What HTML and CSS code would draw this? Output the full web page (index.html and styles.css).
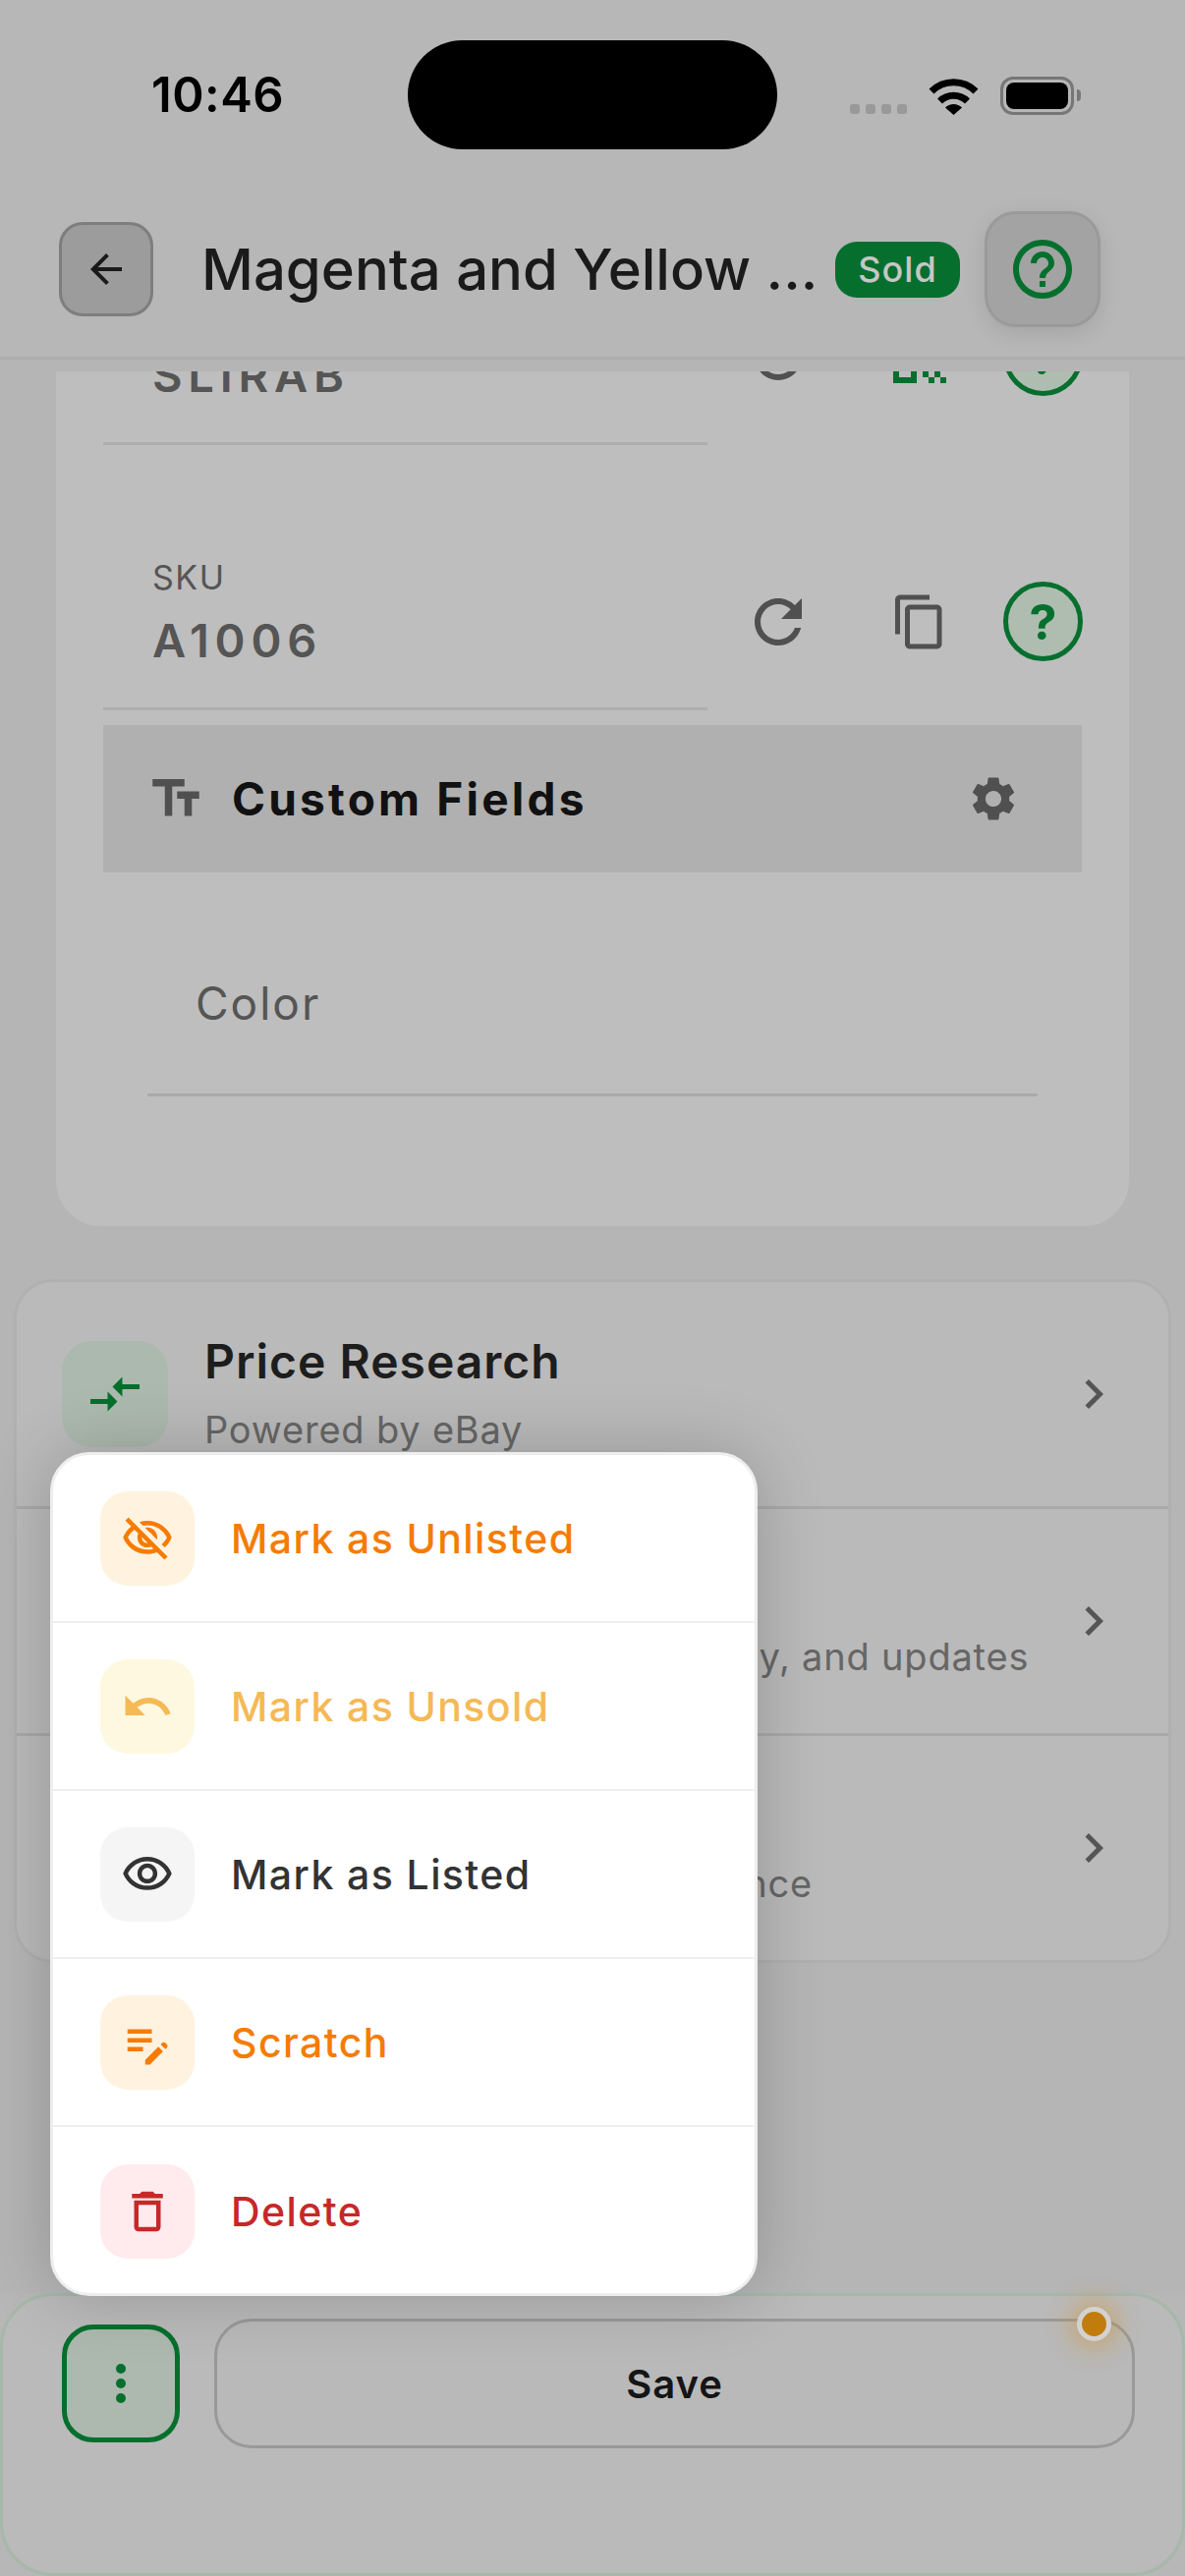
FILE: index.html
```html
<!DOCTYPE html>
<html lang="en">
<head>
<meta charset="utf-8">
<title>Item details</title>
<link rel="stylesheet" href="styles.css">
</head>
<body>
<div class="app">
  <div class="status">
    <div class="time">10:46</div>
    <div class="island"></div>
    <div class="status-icons">
      <div class="signal"><i></i><i></i><i></i><i></i></div>
      <svg class="wifi" viewBox="0 0 51 37"><path d="M3 13A32 32 0 0 1 48 13M11.5 23A20 20 0 0 1 39.5 23" fill="none" stroke="#000" stroke-width="7"/><path d="M17 29.5A12 12 0 0 1 34 29.5L25.5 37z"/></svg>
      <div class="battery"><div class="battery-fill"></div></div>
      <div class="battery-nub"></div>
    </div>
  </div>

  <header class="nav">
    <button class="back"><svg class="i48" viewBox="0 0 24 24"><path d="M20 11H7.83l5.59-5.59L12 4l-8 8 8 8 1.41-1.41L7.83 13H20v-2z"/></svg></button>
    <h1 class="title">Magenta and Yellow ...</h1>
    <span class="badge">Sold</span>
    <button class="help-top"><svg class="i72 green" viewBox="0 0 24 24"><path d="M11 18h2v-2h-2v2zm1-16C6.48 2 2 6.48 2 12s4.48 10 10 10 10-4.48 10-10S17.52 2 12 2zm0 18c-4.41 0-8-3.59-8-8s3.59-8 8-8 8 3.59 8 8-3.59 8-8 8zm0-14c-2.21 0-4 1.79-4 4h2c0-1.1.9-2 2-2s2 .9 2 2c0 2-3 1.75-3 5h2c0-2.25 3-2.5 3-5 0-2.21-1.79-4-4-4z"/></svg></button>
  </header>

  <main class="main">
    <section class="card">
      <div class="card-inner">
        <div class="field">
          <div class="input"><div class="label">Barcode</div><div class="value">SLIRAB</div></div>
          <svg class="i72 act-refresh" viewBox="0 0 24 24"><path d="M17.65 6.35C16.2 4.9 14.21 4 12 4c-4.42 0-7.99 3.58-7.99 8s3.57 8 7.99 8c3.73 0 6.84-2.55 7.73-6h-2.08c-.82 2.33-3.04 4-5.65 4-3.31 0-6-2.69-6-6s2.69-6 6-6c1.66 0 3.14.69 4.22 1.78L13 11h7V4l-2.35 2.35z"/></svg>
          <svg class="i72 green act-qr" viewBox="0 0 24 24"><path d="M3 11h8V3H3v8zm2-6h4v4H5V5zM3 21h8v-8H3v8zm2-6h4v4H5v-4zM13 3v8h8V3h-8zm6 6h-4V5h4v4zM19 19h2v2h-2zM13 13h2v2h-2zM15 15h2v2h-2zM13 17h2v2h-2zM15 19h2v2h-2zM17 17h2v2h-2zM17 13h2v2h-2zM19 15h2v2h-2z"/></svg>
          <span class="help-round">?</span>
        </div>
        <div class="field">
          <div class="input"><div class="label">SKU</div><div class="value">A1006</div></div>
          <svg class="i72 act-refresh" viewBox="0 0 24 24"><path d="M17.65 6.35C16.2 4.9 14.21 4 12 4c-4.42 0-7.99 3.58-7.99 8s3.57 8 7.99 8c3.73 0 6.84-2.55 7.73-6h-2.08c-.82 2.33-3.04 4-5.65 4-3.31 0-6-2.69-6-6s2.69-6 6-6c1.66 0 3.14.69 4.22 1.78L13 11h7V4l-2.35 2.35z"/></svg>
          <svg class="i60 act-copy" viewBox="0 0 24 24"><path d="M16 1H4c-1.1 0-2 .9-2 2v14h2V3h12V1zm3 4H8c-1.1 0-2 .9-2 2v14c0 1.1.9 2 2 2h11c1.1 0 2-.9 2-2V7c0-1.1-.9-2-2-2zm0 16H8V7h11v14z"/></svg>
          <span class="help-round">?</span>
        </div>
        <div class="band">
          <svg class="i60 band-icon" viewBox="0 0 24 24"><path d="M2.5 4v3h5v12h3V7h5V4h-13zm19 5h-9v3h3v7h3v-7h3V9z"/></svg>
          <span class="band-title">Custom Fields</span>
          <svg class="i54 gear" viewBox="0 0 24 24"><path d="M19.14 12.94c.04-.3.06-.61.06-.94 0-.32-.02-.64-.07-.94l2.03-1.58c.18-.14.23-.41.12-.61l-1.92-3.32c-.12-.22-.37-.29-.59-.22l-2.39.96c-.5-.38-1.03-.7-1.62-.94l-.36-2.54c-.04-.24-.24-.41-.48-.41h-3.84c-.24 0-.43.17-.47.41l-.36 2.54c-.59.24-1.13.57-1.62.94l-2.39-.96c-.22-.08-.47 0-.59.22L2.74 8.87c-.12.21-.08.47.12.61l2.03 1.58c-.05.3-.09.63-.09.94s.02.64.07.94l-2.03 1.58c-.18.14-.23.41-.12.61l1.92 3.32c.12.22.37.29.59.22l2.39-.96c.5.38 1.03.7 1.62.94l.36 2.54c.05.24.24.41.48.41h3.84c.24 0 .44-.17.47-.41l.36-2.54c.59-.24 1.13-.56 1.62-.94l2.39.96c.22.08.47 0 .59-.22l1.92-3.32c.12-.22.07-.47-.12-.61l-2.01-1.58zM12 15.6c-1.98 0-3.6-1.62-3.6-3.6s1.62-3.6 3.6-3.6 3.6 1.62 3.6 3.6-1.62 3.6-3.6 3.6z"/></svg>
        </div>
        <div class="color-field">Color</div>
      </div>
    </section>

    <section class="list">
      <div class="row">
        <div class="tile"><svg class="i60 green" viewBox="0 0 24 24"><path d="M9.01 14H2v2h7.01v3L13 15l-3.99-4v3zm5.98-1v-3H22V8h-7.01V5L11 9l3.99 4z"/></svg></div>
        <div class="row-text"><div class="row-title">Price Research</div><div class="row-sub">Powered by eBay</div></div>
        <svg class="i60 chev" viewBox="0 0 24 24"><path d="M10 6L8.59 7.41 13.17 12l-4.58 4.59L10 18l6-6z"/></svg>
      </div>
      <div class="row">
        <div class="tile"><svg class="i60 green" viewBox="0 0 24 24"><path d="M13 3c-4.97 0-9 4.03-9 9H1l3.89 3.89.07.14L9 12H6c0-3.87 3.13-7 7-7s7 3.13 7 7-3.13 7-7 7c-1.93 0-3.68-.79-4.94-2.06l-1.42 1.42C8.27 19.99 10.51 21 13 21c4.97 0 9-4.03 9-9s-4.03-9-9-9z"/></svg></div>
        <div class="row-text"><div class="row-title">Activity</div><div class="row-sub">See your listing history, activity, and updates</div></div>
        <svg class="i60 chev" viewBox="0 0 24 24"><path d="M10 6L8.59 7.41 13.17 12l-4.58 4.59L10 18l6-6z"/></svg>
      </div>
      <div class="row">
        <div class="tile"><svg class="i60 green" viewBox="0 0 24 24"><path d="M16 6l2.29 2.29-4.88 4.88-4-4L2 16.59 3.41 18l6-6 4 4 6.3-6.29L22 12V6z"/></svg></div>
        <div class="row-text"><div class="row-title">Insights</div><div class="row-sub">Reviews, sales, and performance</div></div>
        <svg class="i60 chev" viewBox="0 0 24 24"><path d="M10 6L8.59 7.41 13.17 12l-4.58 4.59L10 18l6-6z"/></svg>
      </div>
    </section>
  </main>

  <footer class="footer">
    <button class="more"><i></i><i></i><i></i></button>
    <button class="save">Save<span class="dot"></span></button>
  </footer>

  <div class="menu">
    <div class="menu-row tone-orange">
      <div class="menu-tile"><svg class="i54" viewBox="0 0 24 24"><path d="M12 6c3.79 0 7.17 2.13 8.82 5.5-.59 1.22-1.42 2.27-2.41 3.12l1.41 1.41c1.39-1.23 2.49-2.77 3.18-4.53C21.27 7.11 17 4 12 4c-1.27 0-2.49.2-3.64.57l1.65 1.65C10.66 6.09 11.32 6 12 6zm-1.07 1.14L13 9.21c.57.25 1.03.71 1.28 1.28l2.07 2.07c.08-.34.14-.7.14-1.07C16.5 9.01 14.48 7 12 7c-.37 0-.72.05-1.07.14zM2.01 3.87l2.68 2.68C3.06 7.83 1.77 9.53 1 11.5 2.73 15.89 7 19 12 19c1.52 0 2.98-.29 4.32-.82l3.42 3.42 1.41-1.41L3.42 2.45 2.01 3.87zm7.5 7.5l2.61 2.61c-.04.01-.08.02-.12.02-1.38 0-2.5-1.12-2.5-2.5 0-.05.01-.08.01-.13zm-3.4-3.4l1.75 1.75c-.23.55-.36 1.15-.36 1.78 0 2.48 2.02 4.5 4.5 4.5.63 0 1.23-.13 1.77-.36l.98.98c-.88.24-1.8.38-2.75.38-3.79 0-7.17-2.13-8.82-5.5.7-1.43 1.72-2.61 2.93-3.53z"/></svg></div>
      <span>Mark as Unlisted</span>
    </div>
    <div class="menu-row tone-amber">
      <div class="menu-tile"><svg class="i54" viewBox="0 0 24 24"><path d="M12.5 8c-2.65 0-5.05.99-6.9 2.6L2 7v9h9l-3.62-3.62c1.39-1.16 3.16-1.88 5.12-1.88 3.54 0 6.55 2.31 7.6 5.5l2.37-.78C21.08 11.03 17.15 8 12.5 8z"/></svg></div>
      <span>Mark as Unsold</span>
    </div>
    <div class="menu-row tone-grey">
      <div class="menu-tile"><svg class="i54" viewBox="0 0 24 24"><path d="M12 6c3.79 0 7.17 2.13 8.82 5.5C19.17 14.87 15.79 17 12 17s-7.17-2.13-8.82-5.5C4.83 8.13 8.21 6 12 6m0-2C7 4 2.73 7.11 1 11.5 2.73 15.89 7 19 12 19s9.27-3.11 11-7.5C21.27 7.11 17 4 12 4zm0 5c1.38 0 2.5 1.12 2.5 2.5S13.38 14 12 14s-2.5-1.12-2.5-2.5S10.62 9 12 9m0-2c-2.48 0-4.5 2.02-4.5 4.5S9.52 16 12 16s4.5-2.02 4.5-4.5S14.48 7 12 7z"/></svg></div>
      <span>Mark as Listed</span>
    </div>
    <div class="menu-row tone-orange">
      <div class="menu-tile"><svg class="i54" viewBox="0 0 24 24"><path d="M3 10h11v2H3v-2zm0-2h11V6H3v2zm0 8h7v-2H3v2zm15.01-3.13.71-.71c.39-.39 1.02-.39 1.41 0l.71.71c.39.39.39 1.02 0 1.41l-.71.71-2.12-2.12zm-1.06 1.06L11 19.88V22h2.12l5.95-5.95-2.12-2.12z"/></svg></div>
      <span>Scratch</span>
    </div>
    <div class="menu-row tone-red">
      <div class="menu-tile"><svg class="i54" viewBox="0 0 24 24"><path d="M16 9v10H8V9h8m-1.5-6h-5l-1 1H5v2h14V4h-3.5l-1-1zM18 7H6v12c0 1.1.9 2 2 2h8c1.1 0 2-.9 2-2V7z"/></svg></div>
      <span>Delete</span>
    </div>
  </div>
</div>
</body>
</html>
```

FILE: styles.css
```css
* { box-sizing: border-box; }
html, body { margin: 0; padding: 0; }
body { font-family: Inter, "Liberation Sans", sans-serif; background: #b7b7b7; }
button { font: inherit; padding: 0; cursor: pointer; }
svg { display: block; flex: none; fill: #505050; }
.i48 { width: 48px; height: 48px; fill: #1a1a1a; }
.i54 { width: 54px; height: 54px; }
.i60 { width: 60px; height: 60px; }
.i72 { width: 72px; height: 72px; }
.green { fill: #066f2e; }

.app { position: relative; width: 1206px; height: 2622px; overflow: hidden; display: flex; flex-direction: column; background: #b7b7b7; }

.status { height: 200px; padding-top: 41px; display: grid; grid-template-columns: 415px 376px 1fr; align-items: start; }
.time { height: 111px; padding: 1px 0 0 154px; font-size: 49px; font-weight: 600; line-height: 110px; color: #000; letter-spacing: .5px; }
.island { height: 111px; background: #000; border-radius: 56px; }
.status-icons { height: 111px; display: flex; align-items: center; padding-left: 74px; }
.signal { display: flex; gap: 6px; align-self: flex-end; margin-bottom: 36px; }
.signal i { width: 10px; height: 10px; border-radius: 3px; background: #999; }
.wifi { width: 51px; height: 37px; margin-left: 22px; fill: #000; margin-top: 3px; }
.battery { width: 75px; height: 39px; margin-left: 22px; border: 3px solid #777; border-radius: 13px; padding: 3px; margin-top: 1px; }
.battery-fill { width: 100%; height: 100%; background: #000; border-radius: 8px; }
.battery-nub { width: 4px; height: 12px; margin-left: 3px; background: #777; border-radius: 0 4px 4px 0; margin-top: 1px; }

.nav { height: 166px; flex: none; padding: 0 85px 15px 60px; display: flex; align-items: center; border-bottom: 3px solid #aeaeae; }
.back { width: 96px; height: 96px; flex: none; display: flex; align-items: center; justify-content: center; border: 3px solid #7e7e7e; border-radius: 24px; background: #9c9c9c; }
.title { width: 645px; flex: none; margin: 0 0 0 49px; font-size: 58px; font-weight: 500; color: #1a1a1a; white-space: nowrap; line-height: 68px; }
.badge { width: 127px; height: 57px; flex: none; display: flex; align-items: center; justify-content: center; background: #066f2e; border-radius: 22px; color: #c6c6c6; font-size: 36px; font-weight: 500; letter-spacing: 1px; }
.help-top { width: 118px; height: 118px; flex: none; margin-left: 25px; display: flex; align-items: center; justify-content: center; background: #a3a3a3; border: 3px solid #9a9a9a; border-radius: 32px; box-shadow: 0 6px 22px rgba(0,0,0,.1); }

.main { flex: 1; min-height: 0; padding-top: 12px; background: #b5b5b5; }
.card { height: 870px; margin: 0 57px; background: #bebebe; border-radius: 0 0 46px 46px; overflow: hidden; }
.card-inner { margin-top: -195px; padding: 0 48px; }

.field { height: 270px; display: flex; align-items: flex-end; }
.input { width: 615px; height: 158px; flex: none; padding-left: 50px; border-bottom: 3px solid #aeaeae; }
.label { height: 61px; font-size: 34px; line-height: 46px; color: #555; letter-spacing: 1.5px; }
.value { font-size: 47px; line-height: 52px; font-weight: 600; color: #555; letter-spacing: 5.8px; }
.act-refresh { margin: 0 78px 54px 36px; }
.act-copy { margin: 0 55px 60px 0; }
.act-qr { margin: 0 49px 54px -6px; }
.help-round { width: 81px; height: 81px; flex: none; margin-bottom: 50px; display: flex; align-items: center; justify-content: center; border: 5px solid #066f2e; border-radius: 50%; background: #afbdb1; color: #066f2e; font-size: 50px; font-weight: 700; }

.band { height: 150px; margin-top: 15px; padding: 0 63px 0 44px; display: flex; align-items: center; background: #b0b0b0; }
.band-title { margin-left: 27px; font-size: 46px; font-weight: 700; color: #111; letter-spacing: 3.2px; flex: 1; }

.color-field { height: 228px; margin: 0 45px; padding: 108px 0 0 49px; border-bottom: 3px solid #aaa; font-size: 46px; line-height: 50px; color: #555; letter-spacing: 2px; }

.list { margin: 54px 14px 0; background: #bababa; border: 3px solid #b0b0b0; border-radius: 40px; overflow: hidden; }
.row { height: 231px; padding: 0 46px; display: flex; align-items: center; border-bottom: 3px solid #a9a9a9; }
.row:last-child { height: 228px; border-bottom: 0; }
.tile { width: 108px; height: 108px; flex: none; display: flex; align-items: center; justify-content: center; border-radius: 30px; background: #acb9ae; }
.row-text { flex: 1; margin-left: 37px; padding-bottom: 5px; }
.row-title { font-size: 48px; font-weight: 600; line-height: 60px; color: #1d1d1d; letter-spacing: 1px; }
.row-sub { margin-top: 16px; font-size: 38px; line-height: 46px; color: #666; letter-spacing: .8px; white-space: nowrap; }
.chev { fill: #555; }

.footer { height: 288px; flex: none; margin-top: auto; padding: 23px 48px 0 60px; display: flex; align-items: flex-start; gap: 35px; background: #bababa; border: 3px solid #a5b8aa; border-radius: 54px; }
.more { width: 120px; height: 120px; flex: none; margin-top: 6px; display: flex; flex-direction: column; align-items: center; justify-content: center; gap: 5px; background: #adb9af; border: 5px solid #066f2e; border-radius: 32px; }
.more i { width: 10px; height: 10px; border-radius: 50%; background: #066f2e; }
.save { position: relative; flex: 1; height: 132px; background: #b9b9b9; border: 3px solid #999; border-radius: 38px; font-size: 40px; font-weight: 600; color: #151515; letter-spacing: 1px; }
.dot { position: absolute; right: 21px; top: -15px; width: 35px; height: 35px; border-radius: 50%; background: #c27c0e; border: 5px solid #d2d2d2; box-shadow: 0 0 26px 6px rgba(214,140,20,.45); }

.menu { position: absolute; left: 51px; top: 1478px; width: 720px; height: 859px; background: #fff; border: 3px solid #eee; border-radius: 40px; overflow: hidden; box-shadow: 0 0 70px rgba(0,0,0,.2); }
.menu-row { height: 171px; padding-left: 48px; display: flex; align-items: center; gap: 37px; font-size: 41px; font-weight: 500; letter-spacing: 1.4px; border-bottom: 2px solid #eee; }
.menu-row:last-child { border-bottom: 0; }
.menu-tile { width: 96px; height: 96px; flex: none; display: flex; align-items: center; justify-content: center; border-radius: 28px; }
.tone-orange { color: #f57c00; }
.tone-orange .menu-tile { background: #fff3e0; }
.tone-orange svg { fill: #f57c00; }
.tone-amber { color: #f5b955; }
.tone-amber .menu-tile { background: #fff8e1; }
.tone-amber svg { fill: #f5b955; }
.tone-grey { color: #333; }
.tone-grey .menu-tile { background: #f5f5f5; }
.tone-grey svg { fill: #333; }
.tone-red { color: #c62828; }
.tone-red .menu-tile { background: #ffebee; }
.tone-red svg { fill: #c62828; }
```
